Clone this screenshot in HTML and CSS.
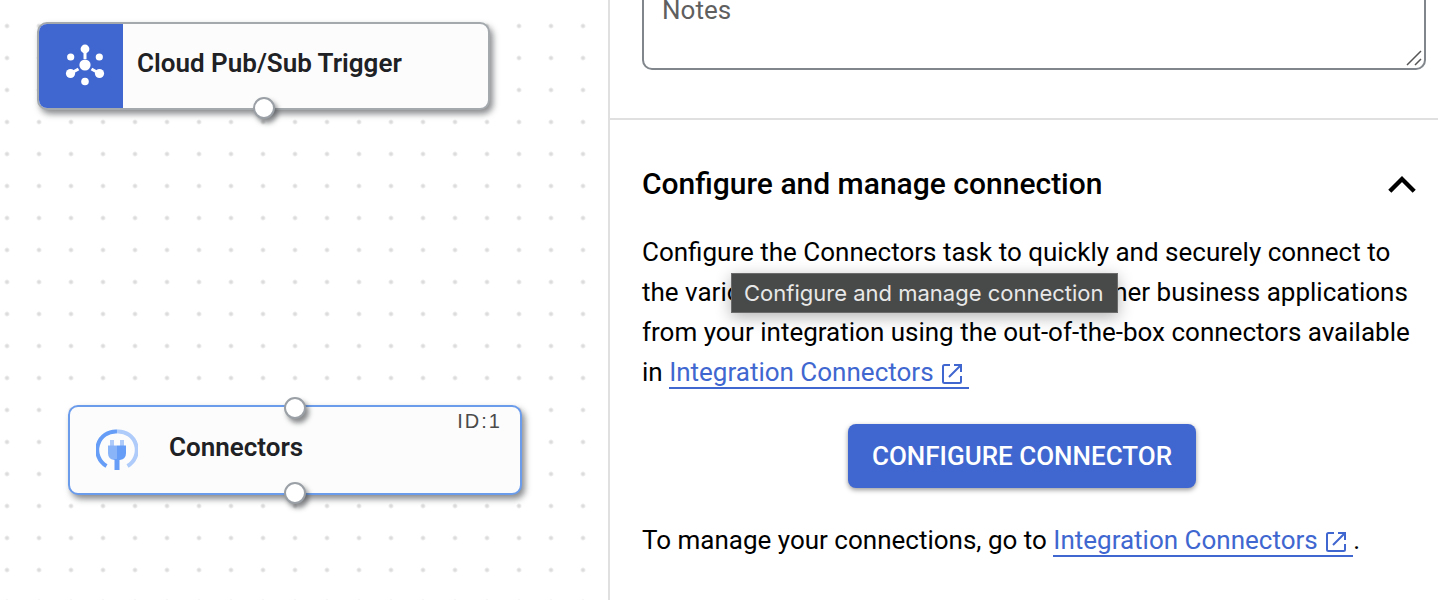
FILE: index.html
```html
<!DOCTYPE html>
<html lang="en">
<head>
<meta charset="utf-8">
<title>Integration editor</title>
<link rel="stylesheet" href="styles.css">
</head>
<body>
<div class="editor">
  <main class="canvas">
    <article class="node node-trigger">
      <div class="node-badge">
        <svg width="40" height="44" viewBox="0 0 40 44" aria-hidden="true">
          <path d="M20 5v10M34.500 29.500l-8-4.500M5.500 29.500l8-4.500" stroke="#fff" stroke-width="3" fill="none"/>
          <g fill="#fff">
            <circle cx="20" cy="21" r="5.600"/>
            <circle cx="20" cy="5" r="4.400"/>
            <circle cx="5.500" cy="29.500" r="4.600"/>
            <circle cx="34.500" cy="29.500" r="4.600"/>
            <circle cx="5.700" cy="13" r="3.600"/>
            <circle cx="34.300" cy="13" r="3.600"/>
            <circle cx="20" cy="37.500" r="3.800"/>
          </g>
        </svg>
      </div>
      <span class="node-title">Cloud Pub/Sub Trigger</span>
      <span class="port port-bottom"></span>
    </article>
    <article class="node node-connectors">
      <svg class="node-icon" width="42" height="42" viewBox="0 0 42 42" aria-hidden="true">
        <path d="M21 2.500A18.500 18.500 0 0 0 10.500 37" fill="none" stroke="#669df6" stroke-width="4"/>
        <path d="M21 2.500A18.500 18.500 0 0 1 31.500 37" fill="none" stroke="#aecbfa" stroke-width="4"/>
        <path d="M14 11h4v6h-4zM24 11h4v6h-4z" fill="#aecbfa"/>
        <path d="M12 16.500h9V31h-3Q12 30 12 24z" fill="#8ab4f8"/>
        <path d="M21 16.500h9V24Q30 30 24 31h-3z" fill="#669df6"/>
        <path d="M18.500 30h5v11h-5z" fill="#669df6"/>
      </svg>
      <span class="node-title">Connectors</span>
      <span class="node-id">ID:1</span>
      <span class="port port-top"></span>
      <span class="port port-bottom"></span>
    </article>
  </main>
  <aside class="panel">
    <div class="notes">
      <textarea class="notes-input" placeholder="Notes" aria-label="Notes"></textarea>
      <svg class="notes-grip" width="18" height="18" viewBox="0 0 18 18" aria-hidden="true">
        <path d="M2 16L16 2M10 16l6-6" stroke="#555" stroke-width="1.500" fill="none"/>
      </svg>
    </div>
    <section class="config">
      <header class="config-head">
        <h2 class="config-title">Configure and manage connection</h2>
        <button class="collapse" aria-label="Collapse section">
          <svg width="28" height="18" viewBox="0 0 28 18" aria-hidden="true">
            <path d="M1.800 16.200L14 4l12.200 12.200" fill="none" stroke="#000" stroke-width="4.400"/>
          </svg>
        </button>
      </header>
      <div class="description">
        <p class="text">Configure the Connectors task to quickly and securely connect to the various Google Cloud services and other business applications from your integration using the out-of-the-box connectors available in <a class="link" href="#">Integration Connectors <svg class="external" width="24" height="24" viewBox="0 0 24 24" aria-hidden="true"><path d="M10 3H4.500Q3 3 3 4.500v15Q3 21 4.500 21h15q1.500 0 1.500-1.500V14M14 3h7v7M21 3L9 15" fill="none" stroke="currentColor" stroke-width="2"/></svg></a></p>
        <div class="tooltip" role="tooltip">Configure and manage connection</div>
      </div>
      <div class="actions">
        <button class="primary">CONFIGURE CONNECTOR</button>
      </div>
      <p class="text">To manage your connections, go to <a class="link" href="#">Integration Connectors <svg class="external" width="24" height="24" viewBox="0 0 24 24" aria-hidden="true"><path d="M10 3H4.500Q3 3 3 4.500v15Q3 21 4.500 21h15q1.500 0 1.500-1.500V14M14 3h7v7M21 3L9 15" fill="none" stroke="currentColor" stroke-width="2"/></svg></a>.</p>
    </section>
  </aside>
</div>
</body>
</html>
```

FILE: styles.css
```css
* {
  box-sizing: border-box;
}

body {
  margin: 0;
  background: #fff;
  color: #000;
  font-family: Roboto, "Liberation Sans", sans-serif;
}

.editor {
  display: flex;
  min-height: 100vh;
}

/* Free canvas with a dotted grid */
.canvas {
  position: relative;
  flex: 1;
  overflow: hidden;
  background-image: radial-gradient(circle, #dcdcdc 1px, transparent 3px);
  background-size: 32px 32px;
  background-position: -9px 10px;
}

.node {
  position: absolute;
  display: flex;
  align-items: center;
  height: 88px;
  border: 2px solid #a4a9ae;
  border-radius: 10px;
  background: #fcfcfc;
  box-shadow: 3px 4px 6px rgba(60, 64, 67, 0.6);
}

.node-trigger {
  left: 37px;
  top: 22px;
  width: 453px;
  gap: 14px;
}

.node-connectors {
  left: 68px;
  top: 405px;
  width: 454px;
  height: 90px;
  padding-left: 26px;
  gap: 31px;
  border-color: #6b9cec;
}

.node-badge {
  display: flex;
  align-items: center;
  justify-content: center;
  align-self: stretch;
  width: 84px;
  padding-left: 8px;
  border-radius: 8px 0 0 8px;
  background: #4067d0;
}

.node-title {
  padding-bottom: 6px;
  color: #202124;
  font-size: 26px;
  font-weight: 600;
  line-height: 32px;
}

.node-id {
  position: absolute;
  top: 2px;
  right: 18px;
  color: #4a4a4a;
  font-family: "Liberation Sans", Arial, sans-serif;
  font-size: 20px;
  line-height: 24px;
  letter-spacing: 2px;
}

.port {
  position: absolute;
  left: 50%;
  width: 22px;
  height: 22px;
  margin-left: -11px;
  border: 2px solid #9aa0a6;
  border-radius: 50%;
  background: #fff;
  box-shadow: 3px 4px 5px rgba(60, 64, 67, 0.6);
}

.port-top {
  top: -10px;
}

.port-bottom {
  bottom: -11px;
}

/* Side panel */
.panel {
  width: 830px;
  border-left: 2px solid #e0e0e0;
}

.notes {
  position: relative;
  padding: 0 12px 48px 32px;
  border-bottom: 2px solid #e0e0e0;
}

.notes-input {
  display: block;
  width: 100%;
  height: 70px;
  padding: 0 18px;
  border: 2px solid #80868b;
  border-top: 0;
  border-radius: 0 0 10px 10px;
  color: #000;
  font-family: inherit;
  font-size: 26px;
  line-height: 20px;
  resize: none;
  overflow: hidden;
}

.notes-input::placeholder {
  color: #5f5f5f;
}

.notes-grip {
  position: absolute;
  right: 15px;
  bottom: 51px;
}

.config {
  padding: 40px 22px 40px 32px;
}

.config-head {
  display: flex;
  align-items: center;
  justify-content: space-between;
  margin-bottom: 24px;
}

.config-title {
  margin: 0;
  font-size: 30px;
  font-weight: 500;
  line-height: 48px;
}

.collapse {
  display: flex;
  padding: 0;
  border: 0;
  background: none;
}

.description {
  position: relative;
}

.text {
  margin: 0;
  font-size: 26px;
  line-height: 40px;
}

.link {
  border-bottom: 2px solid #4067d0;
  color: #4067d0;
  text-decoration: none;
}

.external {
  margin-right: 5px;
  vertical-align: -5px;
}

.tooltip {
  position: absolute;
  left: 89px;
  top: 41px;
  padding: 0 13px 0 12px;
  border: 1px solid #6a6b6a;
  background: #484a49;
  box-shadow: 0 4px 16px rgba(0, 0, 0, 0.3);
  color: #e8e8e8;
  font-family: Inter, "Liberation Sans", sans-serif;
  font-size: 22px;
  line-height: 38px;
  white-space: nowrap;
}

.actions {
  display: flex;
  justify-content: center;
  padding: 32px 14px 32px 0;
}

.primary {
  height: 64px;
  padding: 0 24px;
  border: 0;
  border-radius: 8px;
  background: #4067d0;
  box-shadow: 0 2px 5px rgba(0, 0, 0, 0.4);
  color: #fff;
  font-family: inherit;
  font-size: 26px;
  font-weight: 500;
}
```
